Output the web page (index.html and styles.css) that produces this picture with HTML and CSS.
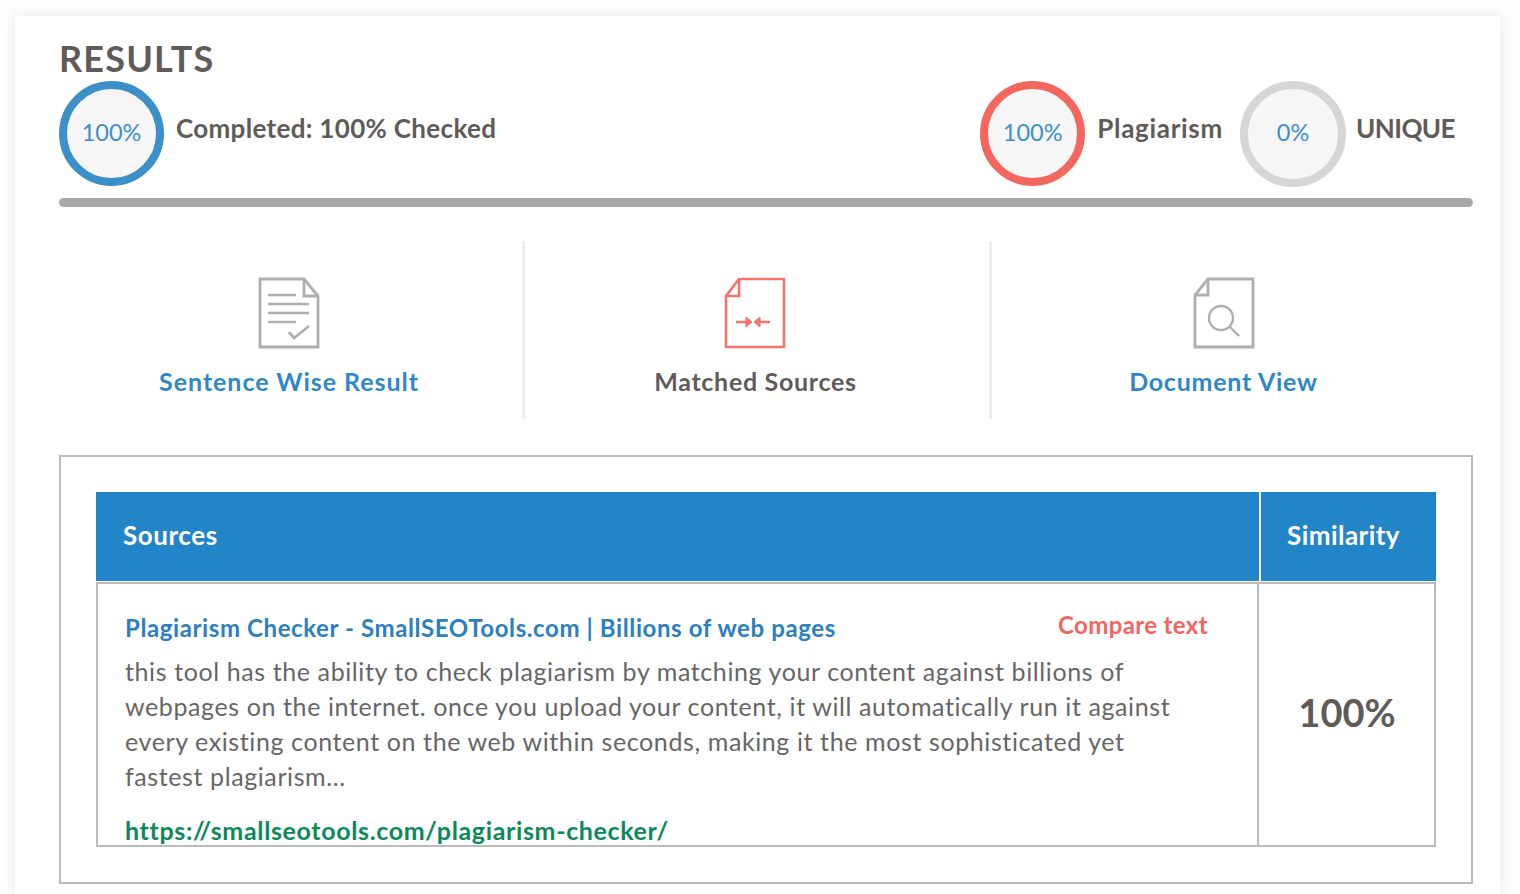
FILE: index.html
```html
<!DOCTYPE html>
<html lang="en">
<head>
<meta charset="utf-8">
<title>Results</title>
<link rel="stylesheet" href="styles.css">
</head>
<body>
<main class="card">
  <h1 class="title">RESULTS</h1>
  <section class="stats">
    <div class="stat stat-grow">
      <div class="ring ring-blue">100%</div>
      <span class="stat-label">Completed: 100% Checked</span>
    </div>
    <div class="stat stat-plag">
      <div class="ring ring-red">100%</div>
      <span class="stat-label label-plag">Plagiarism</span>
    </div>
    <div class="stat stat-unique">
      <div class="ring ring-grey">0%</div>
      <span class="stat-label label-unique">UNIQUE</span>
    </div>
  </section>
  <div class="bar"></div>
  <nav class="tabs">
    <a class="tab tab-one link-blue">
      <svg class="icon" viewBox="0 0 62 72" fill="none" stroke="#aeaeae" stroke-width="2.8">
        <path d="M2 2H46L60 19V70H2Z"/>
        <path d="M46 2V19H60"/>
        <path d="M10 18H38M10 27H51M10 36H51M10 45H38" stroke-width="2.4"/>
        <path d="M31 55L36 61L51 49"/>
      </svg>
      <span>Sentence Wise Result</span>
    </a>
    <a class="tab tab-two link-grey">
      <svg class="icon" viewBox="0 0 62 72" fill="none" stroke="#f4736c" stroke-width="2.6">
        <path d="M15 2H60V70H2V19Z"/>
        <path d="M15 2V19H2"/>
        <path d="M12 45H24M46 45H34" stroke-width="2.6"/>
        <path d="M22 40L28 45L22 50ZM36 40L30 45L36 50Z" fill="#f4736c" stroke-width="1"/>
      </svg>
      <span>Matched Sources</span>
    </a>
    <a class="tab tab-three link-blue">
      <svg class="icon" viewBox="0 0 62 72" fill="none" stroke="#aeaeae" stroke-width="2.8">
        <path d="M15 2H60V70H2V18Z"/>
        <path d="M15 2V18H2"/>
        <circle cx="28" cy="41" r="12" stroke-width="2.4"/>
        <path d="M37 50L46 59" stroke-width="2.4"/>
      </svg>
      <span>Document View</span>
    </a>
  </nav>
  <section class="box">
    <div class="head">
      <div class="head-sources">Sources</div>
      <div class="head-similarity">Similarity</div>
    </div>
    <div class="row">
      <div class="row-main">
        <div class="row-top">
          <a class="source-title">Plagiarism Checker - SmallSEOTools.com | Billions of web pages</a>
          <a class="compare">Compare text</a>
        </div>
        <p class="excerpt">this tool has the ability to check plagiarism by matching your content against billions of<br>webpages on the internet. once you upload your content, it will automatically run it against<br>every existing content on the web within seconds, making it the most sophisticated yet<br>fastest plagiarism...</p>
        <a class="url">https://smallseotools.com/plagiarism-checker/</a>
      </div>
      <div class="row-score">100%</div>
    </div>
  </section>
</main>
</body>
</html>
```
FILE: styles.css
```css
* { box-sizing: border-box; }
html, body { margin: 0; height: 894px; overflow: hidden; background: #fdfdfd; }
body { padding: 16px 20px 0 15px; font-family: "Lato", "Noto Sans", sans-serif; color: #5f5b59; }
.card {
  height: 878px;
  background: #fff;
  box-shadow: 0 0 12px rgba(0, 0, 0, .09);
  padding: 21px 27px 0 44px;
}
.title { margin: 0 0 1px; font-size: 36px; line-height: 43px; font-weight: 700; color: #5f5b59; letter-spacing: 1.2px; }
.stats { display: flex; height: 106px; }
.stat { display: flex; align-items: flex-start; }
.stat-grow { flex: 1; }
.stat-plag { margin-right: 17px; }
.stat-unique { margin-right: 18px; }
.ring {
  width: 106px; height: 106px; border-radius: 50%; border: 8px solid;
  background: #f6f6f6; display: flex; align-items: center; justify-content: center;
  font-size: 23.5px; color: #3c90ca; padding-bottom: 3px;
}
.ring-blue { border-color: #3b90c9; width: 105px; height: 105px; }
.ring-red { border-color: #f4675f; width: 105px; height: 105px; }
.ring-grey { border-color: #d6d6d6; padding-bottom: 4px; }
.stat-label { margin: 29px 0 0 12px; font-size: 26px; line-height: 36px; font-weight: 700; color: #5f5b59; letter-spacing: .32px; white-space: nowrap; }
.label-plag { letter-spacing: .7px; }
.label-unique { letter-spacing: -.55px; margin-left: 10px; }
.bar { height: 9px; margin-top: 11px; border-radius: 5px; background: #a9a9a9; }
.tabs { display: grid; grid-template-columns: 466px 467px 1fr; height: 178px; margin-top: 34px; }
.tab { display: flex; flex-direction: column; align-items: center; padding-top: 36px; font-size: 25px; line-height: 34px; font-weight: 700; letter-spacing: .75px; }
.tab span { margin-top: 15px; white-space: nowrap; }
.tab-one { border-right: 3px solid #eee; padding-right: 3px; letter-spacing: .95px; }
.tab-two { border-right: 3px solid #eee; padding-right: 5px; letter-spacing: .7px; }
.tab-two span { margin-left: 2px; }
.tab-three { padding-right: 18px; }
.link-blue { color: #2f88c6; }
.link-grey { color: #5f5b59; }
.icon { width: 62px; height: 72px; display: block; }
.box { height: 429px; margin-top: 36px; border: 2px solid #bbb; padding: 35px; }
.head { display: flex; height: 89px; background: #2285c8; color: #fff; font-size: 26px; font-weight: 700; }
.head-sources { flex: 1; padding: 27px 0 0 27px; line-height: 32px; letter-spacing: .55px; }
.head-similarity { width: 177px; border-left: 2px solid #fff; padding: 27px 0 0 26px; line-height: 32px; letter-spacing: .45px; }
.row { display: flex; height: 265px; margin-top: 1px; border: 2px solid #bbb; overflow: hidden; }
.row-main { flex: 1; padding: 25px 49px 0 27px; border-right: 2px solid #bbb; }
.row-top { display: flex; justify-content: space-between; height: 45px; }
.source-title { font-size: 24px; line-height: 34px; font-weight: 700; color: #2a80c0; letter-spacing: .6px; padding-top: 2px; white-space: nowrap; }
.compare { font-size: 24px; line-height: 32px; font-weight: 700; color: #f1665f; letter-spacing: .37px; white-space: nowrap; }
.excerpt { margin: 0; font-size: 25px; line-height: 35px; color: #666; letter-spacing: .6px; white-space: nowrap; }
.url { display: block; margin-top: 19px; font-size: 25px; line-height: 34px; font-weight: 700; color: #0a8a58; letter-spacing: .64px; white-space: nowrap; }
.row-score { width: 175px; display: flex; align-items: center; justify-content: center; font-size: 38px; font-weight: 700; color: #5f5b59; padding: 0 0 6px 1px; }
```
